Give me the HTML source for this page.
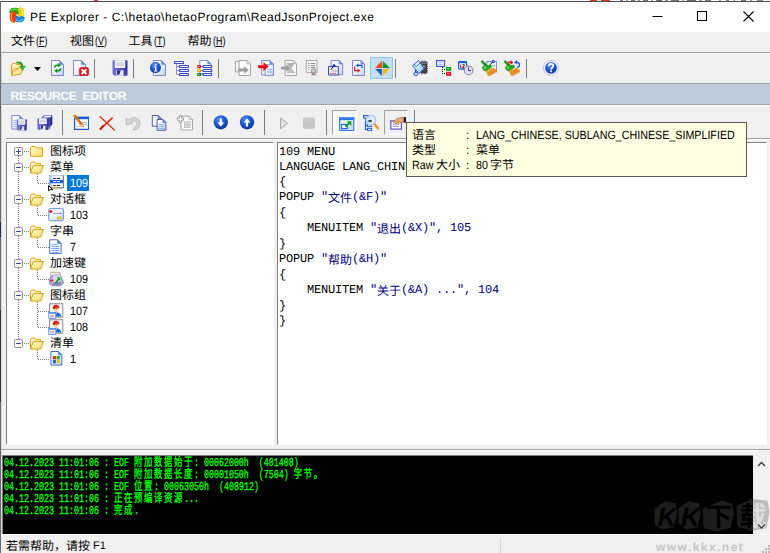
<!DOCTYPE html>
<html lang="zh-CN"><head><meta charset="utf-8"><title>PE Explorer</title>
<style>
html,body{margin:0;padding:0}
body{width:770px;height:553px;overflow:hidden;background:#f0f0f0;position:relative;text-rendering:geometricPrecision;font-family:"Liberation Sans",sans-serif;font-size:12px;color:#000}
body div{position:absolute;box-sizing:border-box}
svg{display:block}
.cj{display:inline-block;vertical-align:top;height:12px;line-height:12px;font-size:12px;letter-spacing:0;white-space:nowrap;overflow:visible;font-family:"Liberation Sans","Noto Sans CJK SC",sans-serif;font-weight:normal;font-style:normal}
.ic{width:16px;height:16px}
#topstrip{left:0;top:0;width:770px;height:1px;background:#fbfbfb}
#topstrip i{position:absolute;top:0;height:1px}
#topline{left:0;top:1px;width:770px;height:1px;background:#4f4f4f}
#leftline{left:0;top:1px;width:1px;height:552px;background:linear-gradient(180deg,#6b6b6b 0 221px,#1c2c5c 221px 236px,#6b6b6b 236px 309px,#30303c 309px 401px,#6b6b6b 401px)}
#leftline2{left:1px;top:32px;width:1px;height:521px;background:#d8d8d8}
#titlebar{left:1px;top:2px;width:769px;height:30px;background:#fff}
#titlebar .ic{left:8px!important;top:5px!important}
#title{left:29px;top:6.5px;font-size:12px;line-height:16px;white-space:nowrap;letter-spacing:.5px}
#wctl{position:absolute;left:649px;top:0}
#menubar{left:1px;top:32px;width:769px;height:20px;background:#f0f0f0}
.mi{white-space:nowrap;height:14px;line-height:12px;font-size:12px}
.mi .mk{font-size:12px;vertical-align:top;line-height:12px;display:inline-block;transform:scaleX(.74);transform-origin:0 0;margin-left:1px}
.hl{left:1px;width:769px;height:1px;background:#a0a0a0}
.hw{left:1px;width:769px;height:1px;background:#fff}
.tb{left:0;top:0;width:0;height:0}
.vs{width:1px;background:#7c7c7c}
.hotbtn{background:#c4def4;border:1px solid #92c6f2}
.downbtn{border:1px solid;border-color:#a0a0a0 #fff #fff #a0a0a0}
.downbtn.white{background:#f8f8f8}
#hdr{left:1px;top:84px;width:769px;height:20px;background:#becbda;color:#fff;font-weight:bold;font-size:12px;line-height:20px}
#hdr span{position:absolute;left:9.5px;top:1.5px;white-space:nowrap;letter-spacing:-.25px;word-spacing:3px}
.panel{background:#fff;border:1px solid;border-color:#828282 #fff #fff #828282;overflow:hidden}
#tree{left:6px;top:142px;width:268px;height:303px}
#editor{left:277px;top:142px;width:490px;height:303px}
#code{margin:0;position:absolute;white-space:pre;left:1px;top:2px;font-family:"Liberation Mono",monospace;font-size:12px;letter-spacing:-.2px;line-height:15px;color:#000}
#code div{position:static;white-space:pre}
#code b{font-weight:normal;color:#000080}
.tl{height:12px;line-height:12px;white-space:nowrap}
.tn{font-size:12px;line-height:14px;white-space:nowrap;transform:scaleX(.9);transform-origin:0 0}
.selt{color:#fff}
.sel{background:#0078d7}
.dh{height:1px;background:repeating-linear-gradient(90deg,#808080 0 1px,transparent 1px 2px)}
.dv{width:1px;background:repeating-linear-gradient(180deg,#808080 0 1px,transparent 1px 2px)}
#tip{left:406px;top:122px;width:341px;height:55px;background:#ffffe1;border:1px solid #575757}
.tt{font-size:12px;line-height:14px;white-space:nowrap}
.tt .nx{display:inline-block;transform:scaleX(.892);transform-origin:0 0;white-space:pre}
#log{left:2px;top:455px;width:751px;height:79px;background:#000;border-left:1px solid #808080;border-top:1px solid #808080;overflow:hidden}
#logtxt{left:1px;top:1px;font-family:"Liberation Mono",monospace;font-weight:normal;-webkit-text-stroke:.35px #00ff00;font-size:12px;line-height:12px;color:#00ff00;white-space:pre;transform:scaleX(.694);transform-origin:0 0}
#logtxt div{position:static;height:12px}
#logtxt .cj{letter-spacing:2.4px;color:#00ff00;font-family:"Liberation Mono","Noto Sans CJK SC",monospace}
#wmclip{left:648px;top:494px;width:105px;height:40px;overflow:hidden}
#wmsb{left:753px;top:456px;width:17px;height:78px;overflow:hidden}
#wmsb>svg:first-child{left:-105px!important;top:38px!important}
#sb{left:753px;top:456px;width:17px;height:78px;background:#f0f0f0}
#status{left:1px;top:534px;width:769px;height:19px;background:#f0f0f0;border-top:1px solid #fff}
.st{white-space:nowrap;line-height:12px;height:12px}
.st .f1{font-size:11px;vertical-align:top;line-height:13px;display:inline-block;white-space:pre}
#sdiv{left:499px;top:3px;width:1px;height:16px;background:#d7d7d7}
#wm2{left:655px;top:5px;font-weight:bold;font-size:12px;color:#c6c6c6;letter-spacing:1.45px}
#grip{position:absolute;right:0;bottom:0}

</style></head>
<body>
<svg width="0" height="0" style="position:absolute;left:-10px;top:-10px" aria-hidden="true"><defs>
<linearGradient id="dg" x1="0" y1="0" x2="1" y2="1"><stop offset="0" stop-color="#fff"/><stop offset=".45" stop-color="#f1f6fe"/><stop offset="1" stop-color="#b9d4f6"/></linearGradient>
<linearGradient id="gg" x1="0" y1="0" x2="1" y2="1"><stop offset="0" stop-color="#fdfdfd"/><stop offset="1" stop-color="#dcdcdc"/></linearGradient>
<linearGradient id="fg" x1="0" y1="0" x2="1" y2="0"><stop offset="0" stop-color="#7274d6"/><stop offset=".5" stop-color="#5558c4"/><stop offset="1" stop-color="#34369c"/></linearGradient>
<radialGradient id="bg" cx=".4" cy=".3" r=".75"><stop offset="0" stop-color="#4f8df2"/><stop offset=".55" stop-color="#1a55cf"/><stop offset="1" stop-color="#082f97"/></radialGradient>
<linearGradient id="yg" x1="0" y1="0" x2="1" y2="1"><stop offset="0" stop-color="#fffbd0"/><stop offset="1" stop-color="#f7dc6a"/></linearGradient>
<linearGradient id="og" x1="0" y1="0" x2="1" y2="1"><stop offset="0" stop-color="#f7b04c"/><stop offset="1" stop-color="#d8801c"/></linearGradient>
<linearGradient id="wg" x1="0" y1="0" x2="1" y2="1"><stop offset="0" stop-color="#fff"/><stop offset="1" stop-color="#9cc6f4"/></linearGradient>
</defs></svg>
<div id="topstrip"><i style="left:94px;width:4px;background:#d04030"></i><i style="left:590px;width:7px;background:#e03a1c"></i><i style="left:601px;width:9px;background:#e03a1c"></i><i style="left:620px;width:3px;background:#8a8a8a"></i><i style="left:626px;width:2px;background:#a8a8a8"></i><i style="left:631px;width:4px;background:#777"></i><i style="left:638px;width:2px;background:#999"></i><i style="left:643px;width:5px;background:#777"></i><i style="left:651px;width:2px;background:#a8a8a8"></i><i style="left:656px;width:6px;background:#6a6a6a"></i><i style="left:665px;width:3px;background:#999"></i><i style="left:671px;width:8px;background:#777"></i><i style="left:682px;width:2px;background:#a8a8a8"></i><i style="left:687px;width:9px;background:#6a6a6a"></i><i style="left:699px;width:3px;background:#999"></i><i style="left:705px;width:6px;background:#777"></i><i style="left:719px;width:2px;background:#999"></i><i style="left:726px;width:3px;background:#8a8a8a"></i><i style="left:733px;width:2px;background:#a8a8a8"></i><i style="left:741px;width:5px;background:#777"></i><i style="left:750px;width:2px;background:#999"></i><i style="left:757px;width:6px;background:#8a8a8a"></i></div><div id="topline"></div><div id="leftline"></div><div id="leftline2"></div>
<div id="titlebar">
<div class="ic" style="left:9px;top:7px;"><svg width="16" height="16" viewBox="0 0 16 16"><rect x="3" y="3" width="10" height="10" fill="#e8ecf4"/><g transform="rotate(0 8 8)"><path d="M.4 6Q-.2 .9 5 .8 8.4 .6 10.6 1.8L12.4 5 8.4 7.6 5.6 5.8Q4.6 5.6 4.6 7.2z" fill="#18a81c"/><path d="M1.8 4Q2.6 2.3 5.6 2.2L9.6 2.8" stroke="#5cd84a" stroke-width="1.2" fill="none" stroke-linecap="round"/></g><g transform="rotate(90 8 8)"><path d="M.4 6Q-.2 .9 5 .8 8.4 .6 10.6 1.8L12.4 5 8.4 7.6 5.6 5.8Q4.6 5.6 4.6 7.2z" fill="#f4ce0a"/><path d="M1.8 4Q2.6 2.3 5.6 2.2L9.6 2.8" stroke="#fff27a" stroke-width="1.2" fill="none" stroke-linecap="round"/></g><g transform="rotate(180 8 8)"><path d="M.4 6Q-.2 .9 5 .8 8.4 .6 10.6 1.8L12.4 5 8.4 7.6 5.6 5.8Q4.6 5.6 4.6 7.2z" fill="#1484e2"/><path d="M1.8 4Q2.6 2.3 5.6 2.2L9.6 2.8" stroke="#5cc2ff" stroke-width="1.2" fill="none" stroke-linecap="round"/></g><g transform="rotate(270 8 8)"><path d="M.4 6Q-.2 .9 5 .8 8.4 .6 10.6 1.8L12.4 5 8.4 7.6 5.6 5.8Q4.6 5.6 4.6 7.2z" fill="#ec3a0c"/><path d="M1.8 4Q2.6 2.3 5.6 2.2L9.6 2.8" stroke="#ff9c2a" stroke-width="1.2" fill="none" stroke-linecap="round"/></g></svg></div>
<div id="title">PE Explorer - C:\hetao\hetaoProgram\ReadJsonProject.exe</div>
<svg id="wctl" width="120" height="30" viewBox="0 0 120 30"><path d="M2.5 14.5h10" stroke="#000" fill="none"/><rect x="47.5" y="9.5" width="9" height="9" stroke="#000" fill="none"/><path d="M93.5 9.5l10 10M103.5 9.5l-10 10" stroke="#000" stroke-width="1.1" fill="none"/></svg>
</div>
<div id="menubar">
<div class="mi" style="left:10px;top:3px;"><span class="cj" style="width:24px">文件</span><span class="mk">(<u>F</u>)</span></div>
<div class="mi" style="left:69px;top:3px;"><span class="cj" style="width:24px">视图</span><span class="mk">(<u>V</u>)</span></div>
<div class="mi" style="left:127.5px;top:3px;"><span class="cj" style="width:24px">工具</span><span class="mk">(<u>T</u>)</span></div>
<div class="mi" style="left:186.5px;top:3px;"><span class="cj" style="width:24px">帮助</span><span class="mk">(<u>H</u>)</span></div>
</div>
<div class="hl" style="top:52px"></div><div class="hw" style="top:53px"></div>
<div id="tb1" class="tb">
<div class="hotbtn" style="left:370px;top:57px;width:23px;height:22px"></div>
<div class="ic" style="left:10px;top:60px;"><svg width="16" height="16" viewBox="0 0 16 16"><path d="M1.5 15.4V4.8L3 3.5H5.6L6.8 4.6H11.2L11.6 7.2" fill="url(#yg)" stroke="#d6a21e"/><path d="M1.5 15.5L3.4 9.4 13.8 6.8 10.8 14.2z" fill="url(#yg)" stroke="#d6a21e"/><path d="M2.8 12L9.4 8.8" stroke="#e2b43c" stroke-width=".8" fill="none"/><path d="M6.4 2.6H9.6Q12 3 12.4 6.4" stroke="#14921a" stroke-width="1.6" fill="none"/><path d="M9.8 6.4L15.2 6.2 12.6 10.2z" fill="#3cc43c" stroke="#128a18" stroke-width=".7"/></svg></div>
<div class="ic" style="left:51px;top:60px;"><svg width="16" height="16" viewBox="0 0 16 16"><path d="M0.5 0.5H8.5L12.5 4.5V15.5H0.5z" fill="url(#dg)" stroke="#8488cc"/><path d="M8.5 0.5V4.5H12.5z" fill="#4aa2ee" stroke="#8488cc" stroke-width=".6"/><path d="M2.6 7.4Q3.2 4.2 6.8 4.4L7 3 10 5.2 7 7.4 7 6Q4.6 5.8 4.2 7.6z" fill="#12961a"/><path d="M10.6 8.4Q10 11.8 6.4 11.6L6.2 13 3.2 10.8 6.2 8.6 6.2 10Q8.6 10.2 9 8.2z" fill="#12961a"/></svg></div>
<div class="ic" style="left:73px;top:60px;"><svg width="16" height="16" viewBox="0 0 16 16"><path d="M0.5 0.5H8.5L12.5 4.5V15.5H0.5z" fill="url(#dg)" stroke="#8488cc"/><path d="M8.5 0.5V4.5H12.5z" fill="#4aa2ee" stroke="#8488cc" stroke-width=".6"/><rect x="6.4" y="7.4" width="9.2" height="8.4" rx="2" fill="#d8201c" stroke="#b80c10" stroke-width=".6"/><path d="M8.6 9.4l4.8 4.6M13.4 9.4l-4.8 4.6" stroke="#fff" stroke-width="1.9"/></svg></div>
<div class="ic" style="left:112px;top:60px;"><svg width="16" height="16" viewBox="0 0 16 16"><g transform="translate(0 0) scale(1 1)"><path d="M.5 1.6Q.5 .3 1.8 .3H14.2Q15.5 .3 15.5 1.6V14.6Q15.5 15.8 14.2 15.8H2.4L.5 14z" fill="url(#fg)"/><rect x="2.8" y=".3" width="10.4" height="7.6" fill="#fdfdff"/><rect x="3.8" y="2" width="8.4" height="4.4" fill="#d6d6dc"/><rect x="4.3" y="10.2" width="7.2" height="5.6" fill="#ececf4"/><path d="M5 10.2h3.8l-1.6 4.6H5z" fill="#2c2e8c"/></g></svg></div>
<div class="ic" style="left:150px;top:60px;"><svg width="16" height="16" viewBox="0 0 16 16"><path d="M3.5 0.5H11.5L15.5 4.5V15.5H3.5z" fill="url(#dg)" stroke="#8488cc"/><path d="M11.5 0.5V4.5H15.5z" fill="#4aa2ee" stroke="#8488cc" stroke-width=".6"/><circle cx="5.4" cy="7.6" r="5.5" fill="url(#bg)"/><path d="M4.2 6.6H6.4V10.4H7.4V11.4H4V10.4H5V7.6H4.2zM4.8 3.8h1.8v1.8H4.8z" fill="#fff"/></svg></div>
<div class="ic" style="left:173px;top:60px;"><svg width="16" height="16" viewBox="0 0 16 16"><path d="M3.5 3.5V14.5H7M3.5 6.5H7M3.5 10.5H7" stroke="#8e92d6" fill="none"/><rect x="1.5" y="1.5" width="9" height="2" rx=".3" fill="#f4f8ff" stroke="#3a4ec4" stroke-width="1.1"/><rect x="6.5" y="5.5" width="9" height="2" rx=".3" fill="#f4f8ff" stroke="#3a4ec4" stroke-width="1.1"/><rect x="6.5" y="9.5" width="9" height="2" rx=".3" fill="#f4f8ff" stroke="#3a4ec4" stroke-width="1.1"/><rect x="6.5" y="13.5" width="9" height="2" rx=".3" fill="#f4f8ff" stroke="#3a4ec4" stroke-width="1.1"/></svg></div>
<div class="ic" style="left:197px;top:60px;"><svg width="16" height="16" viewBox="0 0 16 16"><path d="M2.8 0.5H10.6L14 3.9V13.5H2.8z" fill="#fff" stroke="#8488cc"/><path d="M10.6 0.5V3.9H14z" fill="#4aa2ee" stroke="#8488cc" stroke-width=".6"/><path d="M3 6.5h3M3 10.5h3M3 14.5h3" stroke="#8e92d6"/><rect x="6.1" y="5.5" width="8.6" height="2" rx=".3" fill="#f4f8ff" stroke="#3a4ec4" stroke-width="1.1"/><rect x="6.1" y="9.5" width="8.6" height="2" rx=".3" fill="#f4f8ff" stroke="#3a4ec4" stroke-width="1.1"/><rect x="6.1" y="13.5" width="8.6" height="2" rx=".3" fill="#f4f8ff" stroke="#3a4ec4" stroke-width="1.1"/><rect x=".2" y="5" width="3.8" height="3" fill="#e81c1c"/><rect x=".2" y="9" width="3.8" height="3" fill="#ffa60a"/><rect x=".2" y="13" width="3.8" height="3" fill="#0c8a10"/><rect x="1.2" y="6" width="1.8" height="1" fill="#ff8a8a"/><rect x="1.2" y="10" width="1.8" height="1" fill="#ffe27a"/><rect x="1.2" y="14" width="1.8" height="1" fill="#5fd85f"/></svg></div>
<div class="ic" style="left:235px;top:60px;"><svg width="16" height="16" viewBox="0 0 16 16"><path d="M0.5 1.5H6.3L8.9 4.1V11.9H0.5z" fill="#f6f6f6" stroke="#a4a4a4"/><path d="M6.3 1.5V4.1H8.9z" fill="#e4e4e4" stroke="#a4a4a4" stroke-width=".6"/><path d="M4.1 0.5H11.9L15.5 4.1V15.5H4.1z" fill="#fbfbfb" stroke="#a4a4a4"/><path d="M11.9 0.5V4.1H15.5z" fill="#e4e4e4" stroke="#a4a4a4" stroke-width=".6"/><path d="M3 8.4H9.2V6.2L13.8 10 9.2 13.8V11.6H3z" fill="#9e9e9e"/></svg></div>
<div class="ic" style="left:258px;top:60px;"><svg width="16" height="16" viewBox="0 0 16 16"><path d="M3.7 0.5H11.9L15.5 4.1V14.9H3.7z" fill="url(#dg)" stroke="#8488cc"/><path d="M11.9 0.5V4.1H15.5z" fill="#4aa2ee" stroke="#8488cc" stroke-width=".6"/><path d="M7.2 4.6H15.4V15.5H7.2z" fill="url(#dg)" stroke="#7a7ec4" stroke-width=".8"/><path d="M9 9.5h5M9 12h5" stroke="#9cc0f0" stroke-width="1.4"/><path d="M.2 5H5.4V2L10.6 6.6 5.4 11.2V8.2H.2z" fill="#ec0c14"/><path d="M.8 5.6H5.8V3.4" stroke="#ff6a6a" stroke-width=".6" fill="none"/></svg></div>
<div class="ic" style="left:281px;top:60px;"><svg width="16" height="16" viewBox="0 0 16 16"><path d="M4.1 0.5H12.3L15.5 3.7V15.5H4.1z" fill="#fafafa" stroke="#a4a4a4"/><path d="M12.3 0.5V3.7H15.5z" fill="#e6e6e6" stroke="#a4a4a4" stroke-width=".6"/><path d="M6 3.4H13L6.4 12.6H13.4L6 3.4M13 3.4" fill="#d9d9d9" stroke="#a6a6a6" stroke-width=".9"/><path d="M6 3.6H12.6L9.4 8z" fill="#b2b2b2"/><path d="M6.6 12.4H13L9.8 8z" fill="#c4c4c4"/><path d="M0 6.8H5V4.6L9.4 8.2 5 11.8V9.6H0z" fill="#9e9e9e"/></svg></div>
<div class="ic" style="left:304px;top:60px;"><svg width="16" height="16" viewBox="0 0 16 16"><path d="M2.3 .5H13V12.4H2.3z" fill="#fafafa" stroke="#a8a8a8"/><path d="M4 3.5h1.4M6.6 3.5h4.6M4 5.5h1.4M6.6 5.5h4.6M4 7.5h1.4M6.6 7.5h4.6M4 9.5h1.4" stroke="#8e8e8e"/><circle cx="9.6" cy="11" r="2.4" fill="#c9c9c9" stroke="#8c8c8c" stroke-width=".8"/><path d="M7.6 12.6V16L9.6 14.6 11.6 16V12.6" fill="#9c9c9c"/><rect x="8.8" y="14" width="1.6" height="1.2" fill="#e030d0"/></svg></div>
<div class="ic" style="left:328px;top:60px;"><svg width="16" height="16" viewBox="0 0 16 16"><path d="M3.1 0.5H11.1L14.7 4.1V14.7H3.1z" fill="url(#dg)" stroke="#8488cc"/><path d="M11.1 0.5V4.1H14.7z" fill="#4aa2ee" stroke="#8488cc" stroke-width=".6"/><path d="M.5 6.5H10.4V15H.5z" fill="#e6effc" stroke="#3038a0" stroke-width=".9"/><path d="M2.8 9.8L5.4 6.4" stroke="#101010" stroke-width="1"/><circle cx="6" cy="5.6" r="1.4" fill="#1030e0"/><path d="M3.6 10.6H7.6V9.6L9.4 11 7.6 12.4V11.4H3.6z" fill="#b4b4b4"/><path d="M2.2 13.4h1.2M4.4 13.4h1.2M6.6 13.4h1.2" stroke="#ee1414" stroke-width="1"/></svg></div>
<div class="ic" style="left:351px;top:60px;"><svg width="16" height="16" viewBox="0 0 16 16"><path d="M1.5 0.5H9.9L13.5 4.1V15.5H1.5z" fill="url(#dg)" stroke="#8488cc"/><path d="M9.9 0.5V4.1H13.5z" fill="#4aa2ee" stroke="#8488cc" stroke-width=".6"/><path d="M11 8V5.4H7" stroke="#1450e0" stroke-width="1.2" fill="none"/><path d="M4.8 5.4L7.4 3.2V7.6z" fill="#1450e0"/><path d="M3.6 6.6V10.6H7" stroke="#ee1418" stroke-width="1.2" fill="none"/><path d="M9.2 10.6L6.6 8.4V12.8z" fill="#ee1418"/></svg></div>
<div class="ic" style="left:375px;top:60px;"><svg width="16" height="16" viewBox="0 0 16 16"><path d="M6.8 .8V8H0z" fill="#f2561c"/><path d="M6.8 2.4V8H1.6z" fill="#d83a0e" opacity=".55"/><path d="M7.8 .8V8H15z" fill="#2c9c28"/><path d="M7.8 2.6V8H13z" fill="#127a16" opacity=".5"/><path d="M6.8 16V9H0z" fill="#2668c6"/><path d="M6.8 14V9H2z" fill="#134a9e" opacity=".55"/><path d="M7.8 16V9H15z" fill="#f6c420"/><path d="M7.8 14V9H12.8z" fill="#e6a808" opacity=".5"/></svg></div>
<div class="ic" style="left:412px;top:60px;"><svg width="16" height="16" viewBox="0 0 16 16"><path d="M8.6 1.6H15V13.2H8.6z" fill="#404040"/><path d="M9 2.8H15V3.8H9z" fill="#8a8a8a"/><rect x="10.6" y="5.4" width="2.2" height="2.2" fill="#9a9a9a"/><path d="M9.2 .6v1M10.8 .6v1M12.4 .6v1M14 .6v1M15 3h1M15 4.8h1M15 6.6h1M15 8.4h1M15 10.2h1M15 12h1M9.4 13.2v1M11 13.2v1M12.6 13.2v1M14.2 13.2v1" stroke="#404040" stroke-width=".9"/><path d="M6.6 .5L12 8.6 7 13.4 .5 5.8z" fill="url(#wg)" stroke="#2264e0"/><path d="M2.2 4.2L4.2 6.8 8.6 2.4" stroke="#2264e0" stroke-width=".9" fill="none"/><ellipse cx="3.8" cy="14" rx="2.1" ry="1.7" fill="#d4e6fc" stroke="#1c3cc8" stroke-width=".9"/><path d="M3.4 10.2L3.8 12.4" stroke="#1c3cc8" stroke-width="1.4"/></svg></div>
<div class="ic" style="left:436px;top:60px;"><svg width="16" height="16" viewBox="0 0 16 16"><rect x=".6" y=".6" width="8" height="5.8" fill="#fff" stroke="#3c4cc8" stroke-width="1.1"/><path d="M2.2 2.6h4.8M2.2 4.4h4.8" stroke="#8cbcf6" stroke-width=".9"/><path d="M6 7h1v1H6zM6 9h1v1H6zM6 11h1v1H6zM6 13h1v1H6zM8 9h1v1H8zM8 13h1v1H8z" fill="#111"/><rect x="10" y="7" width="5.2" height="3.8" fill="#0c9c14"/><rect x="11" y="8" width="2.4" height="1.2" fill="#64dc64"/><rect x="10" y="11.8" width="5.2" height="4" fill="#e8141c"/><rect x="11" y="12.8" width="2.4" height="1.2" fill="#ff7a7a"/></svg></div>
<div class="ic" style="left:458px;top:60px;"><svg width="16" height="16" viewBox="0 0 16 16"><rect x=".6" y="1.6" width="8" height="7.6" rx="1" fill="#fff" stroke="#1a5ce0" stroke-width="1.2"/><path d="M.6 1.4h8v1.8h-8z" fill="#1a5ce0"/><path d="M2.8 4.4v3.6M4.6 4.6Q6.4 4 6.2 5.6L4.6 8H6.6" stroke="#8c0c0c" stroke-width="1.1" fill="none"/><circle cx="10.6" cy="10.4" r="4.3" fill="#dcdcfa" stroke="#8c8c94" stroke-width="1.1"/><path d="M10.6 7.6V10.6H13" stroke="#38384a" stroke-width="1" fill="none"/></svg></div>
<div class="ic" style="left:481px;top:60px;"><svg width="16" height="16" viewBox="0 0 16 16"><rect x="5.8" y="1.5" width="9.8" height="9.4" fill="#e4eefc" stroke="#8088c8"/><path d="M9 4.8L11.6 2" stroke="#101010" stroke-width="1"/><circle cx="12.4" cy="1.5" r="1.5" fill="#1030e0"/><circle cx="12.4" cy="1.5" r=".5" fill="#fff"/><path d="M10.8 5.2h2.4v-.9l1.6 1.4-1.6 1.4v-.9h-2.4z" fill="#b4b4b4"/><rect x="11.8" y="8" width="1.2" height="1.2" fill="#ee1414"/><path d="M-.1 1.7L1.3 .5 5.8 4.8 4.3 6.2z" fill="#169c1a" stroke="#0a7410" stroke-width=".5"/><path d="M1.2 7.6L4 4.6 6.2 5.6 9.8 5.2 10.6 7 7.6 9.2 4.6 11 2.6 10z" fill="#1eaa22" stroke="#0a7410" stroke-width=".6"/><circle cx="3.9" cy="7.7" r="1.3" fill="#66e052"/><path d="M4.8 11L10.8 7.9 12.8 7.8 16.2 10.8 15.8 12.6 14 12.6 13.4 14 11.4 14 10.8 15.4 8.8 15.4 8.2 16.2 6.4 15z" fill="url(#og)"/><path d="M7 11.6l1.6 2.6M9.2 10.4l1.8 2.6M11.4 9.4l1.8 2.4" stroke="#c4700e" stroke-width=".7"/></svg></div>
<div class="ic" style="left:504px;top:60px;"><svg width="16" height="16" viewBox="0 0 16 16"><path d="M3.9 1.6H6.6V0L9.4 2.4 6.6 4.8V3.2H3.9z" fill="#ee141c"/><path d="M12.4 2.2Q15.6 2.4 15.6 5 15.4 7.4 12.8 7.4" stroke="#1c5ce0" stroke-width="1.4" fill="none"/><path d="M10 2.2L13 0V4.4z" fill="#1c5ce0"/><path d="M-.1 1.7L1.3 .5 5.8 4.8 4.3 6.2z" fill="#169c1a" stroke="#0a7410" stroke-width=".5"/><path d="M1.2 7.6L4 4.6 6.2 5.6 9.8 5.2 10.6 7 7.6 9.2 4.6 11 2.6 10z" fill="#1eaa22" stroke="#0a7410" stroke-width=".6"/><circle cx="3.9" cy="7.7" r="1.3" fill="#66e052"/><path d="M4.8 11L10.8 7.9 12.8 7.8 16.2 10.8 15.8 12.6 14 12.6 13.4 14 11.4 14 10.8 15.4 8.8 15.4 8.2 16.2 6.4 15z" fill="url(#og)"/><path d="M7 11.6l1.6 2.6M9.2 10.4l1.8 2.6M11.4 9.4l1.8 2.4" stroke="#c4700e" stroke-width=".7"/></svg></div>
<div class="ic" style="left:543px;top:60px;"><svg width="16" height="16" viewBox="0 0 16 16"><circle cx="8" cy="7.8" r="7.5" fill="#fdfdff" stroke="#aab4dc" stroke-width=".8"/><circle cx="8" cy="7.8" r="5.9" fill="url(#bg)"/><path d="M5.8 6.2Q5.8 3.8 8 3.8 10.3 3.8 10.3 5.8 10.3 7 9 7.8 8.1 8.4 8.1 9.4" stroke="#fff" stroke-width="1.7" fill="none"/><rect x="7.2" y="10.4" width="1.8" height="1.8" fill="#fff"/></svg></div>
<div class="ic" style="left:34px;top:67px;"><svg width="7" height="4" viewBox="0 0 7 4"><path d="M0 0h7L3.5 4z" fill="#000"/></svg></div>
<div class="vs" style="left:94px;top:59px;height:19px"></div>
<div class="vs" style="left:133px;top:59px;height:19px"></div>
<div class="vs" style="left:218px;top:59px;height:19px"></div>
<div class="vs" style="left:395px;top:59px;height:19px"></div>
<div class="vs" style="left:526px;top:59px;height:19px"></div>
</div>
<div class="hl" style="top:83px"></div>
<div id="hdr"><span>RESOURCE EDITOR</span></div>
<div class="hl" style="top:104px"></div><div class="hw" style="top:105px"></div>
<div id="tb2" class="tb">
<div class="downbtn white" style="left:332px;top:110px;width:25px;height:25px"></div>
<div class="downbtn" style="left:384px;top:110px;width:24px;height:25px"></div>
<div class="ic" style="left:11px;top:115px;"><svg width="16" height="16" viewBox="0 0 16 16"><path d="M0.8 0.5H8.6L12.2 4.1V14.1H0.8z" fill="url(#dg)" stroke="#8488cc"/><path d="M8.6 0.5V4.1H12.2z" fill="#4aa2ee" stroke="#8488cc" stroke-width=".6"/><path d="M2.4 5.5h3M2.4 7.5h3M2.4 9.5h3M2.4 11.5h3" stroke="#9cb8e8"/><g transform="translate(5.4 4) scale(0.675 0.725)"><path d="M.5 1.6Q.5 .3 1.8 .3H14.2Q15.5 .3 15.5 1.6V14.6Q15.5 15.8 14.2 15.8H2.4L.5 14z" fill="url(#fg)"/><rect x="2.8" y=".3" width="10.4" height="7.6" fill="#fdfdff"/><rect x="3.8" y="2" width="8.4" height="4.4" fill="#d6d6dc"/><rect x="4.3" y="10.2" width="7.2" height="5.6" fill="#ececf4"/><path d="M5 10.2h3.8l-1.6 4.6H5z" fill="#2c2e8c"/></g></svg></div>
<div class="ic" style="left:37px;top:115px;"><svg width="16" height="16" viewBox="0 0 16 16"><path d="M4.6 2.6L7.4 0H15.2V9.4L12 12.4z" fill="#3c3ea8"/><path d="M7.6 .6H14.4V2.4H6z" fill="#f4f4fc"/><path d="M13.4 2.6L15.2 .8V9.4L13.4 11z" fill="#2a2c8c"/><g transform="translate(0 3) scale(0.7375 0.7625)"><path d="M.5 1.6Q.5 .3 1.8 .3H14.2Q15.5 .3 15.5 1.6V14.6Q15.5 15.8 14.2 15.8H2.4L.5 14z" fill="url(#fg)"/><rect x="2.8" y=".3" width="10.4" height="7.6" fill="#fdfdff"/><rect x="3.8" y="2" width="8.4" height="4.4" fill="#d6d6dc"/><rect x="4.3" y="10.2" width="7.2" height="5.6" fill="#ececf4"/><path d="M5 10.2h3.8l-1.6 4.6H5z" fill="#2c2e8c"/></g><path d="M11.8 3.4L13.2 2.2V13.2L11.8 14.6z" fill="#4a4cb8"/></svg></div>
<div class="ic" style="left:73px;top:115px;"><svg width="16" height="16" viewBox="0 0 16 16"><rect x="1.6" y="2.4" width="14" height="12" fill="#fff" stroke="#1c5cdc" stroke-width="1.3"/><path d="M1 1.8h15.2v2.4H1z" fill="#1c5cdc"/><path d="M8 7.5h6M6 9.5h8M4 11.5h7" stroke="#b8b8b8"/><path d="M-.2 .4L2.4 -.4 10 9.4 7.6 10.8z" fill="#f08a1c"/><path d="M.6 -.1L2.4 -.4 10 9.4 8.8 10z" fill="#d46a0c"/><path d="M7.6 10.8L10 9.4 10.9 12.4z" fill="#f0d0a0"/><path d="M9.6 11.2L10.4 10.8 10.9 12.4z" fill="#303030"/></svg></div>
<div class="ic" style="left:99px;top:115px;"><svg width="16" height="16" viewBox="0 0 16 16"><path d="M.6 1.2L16 15.6" stroke="#e02408" stroke-width="1.2"/><path d="M13.6 2.6Q8 7.6 1.2 14.4" stroke="#e02408" stroke-width="1.5"/><path d="M4.6 10.4L1 14.6" stroke="#c81c04" stroke-width="2.2"/></svg></div>
<div class="ic" style="left:125px;top:115px;"><svg width="16" height="16" viewBox="0 0 16 16"><path d="M1 3L1.4 9.6 8 8.6 5.6 7Q8.6 4.4 11.4 6.6 13.4 9 10 12.4L8 14.4 11.4 14.8Q16.6 10.8 14.6 6 12.4 2 7.6 2.8 5.6 3.2 3.8 5z" fill="#d6d6d6" stroke="#b2b2b2" stroke-width=".8"/></svg></div>
<div class="ic" style="left:151px;top:115px;"><svg width="16" height="16" viewBox="0 0 16 16"><path d="M1.3 0.5H7.1L10.1 3.5V11.3H1.3z" fill="url(#dg)" stroke="#5458ac"/><path d="M7.1 0.5V3.5H10.1z" fill="#4aa2ee" stroke="#5458ac" stroke-width=".6"/><path d="M6.1 4.5H11.9L14.9 7.5V15.3H6.1z" fill="url(#dg)" stroke="#5458ac"/><path d="M11.9 4.5V7.5H14.9z" fill="#4aa2ee" stroke="#5458ac" stroke-width=".6"/><path d="M7.4 9.6h5.8M7.4 11.6h5.8M7.4 13.5h5.8" stroke="#8cb8f0" stroke-width="1.2"/></svg></div>
<div class="ic" style="left:177px;top:115px;"><svg width="16" height="16" viewBox="0 0 16 16"><path d="M3.9 1.1H12.1L15.5 4.5V14.9H3.9z" fill="#fbfbfb" stroke="#a4a4a4"/><path d="M12.1 1.1V4.5H15.5z" fill="#e6e6e6" stroke="#a4a4a4" stroke-width=".6"/><rect x="7" y="6.4" width="6.6" height="6.6" fill="#b8b8b8"/><rect x="7.8" y="7.2" width="2.2" height="2.2" fill="#e4e4e4"/><rect x="10.8" y="7.2" width="2.2" height="2.2" fill="#e4e4e4"/><rect x="7.8" y="10.2" width="2.2" height="2.2" fill="#e4e4e4"/><rect x="10.8" y="10.2" width="2.2" height="2.2" fill="#e4e4e4"/><path d="M2.3 .9H4.5V3H6.6V5.2H4.5V7.3H2.3V5.2H.2V3H2.3z" fill="#fff" stroke="#989898" stroke-width="1"/></svg></div>
<div class="ic" style="left:213px;top:115px;"><svg width="16" height="16" viewBox="0 0 16 16"><circle cx="7.8" cy="7.3" r="7.1" fill="url(#bg)"/><path d="M6.7 3.4H8.9V7.4H11.2L7.8 11.4 4.4 7.4H6.7z" fill="#fff"/></svg></div>
<div class="ic" style="left:239px;top:115px;"><svg width="16" height="16" viewBox="0 0 16 16"><circle cx="8" cy="7.3" r="7.1" fill="url(#bg)"/><path d="M6.9 11.4H9.1V7.4H11.4L8 3.4 4.6 7.4H6.9z" fill="#fff"/></svg></div>
<div class="ic" style="left:277px;top:115px;"><svg width="16" height="16" viewBox="0 0 16 16"><path d="M3.5 2.9L10.6 8.4 3.5 13.9z" fill="#dedede" stroke="#ababab"/></svg></div>
<div class="ic" style="left:301px;top:115px;"><svg width="16" height="16" viewBox="0 0 16 16"><rect x="2" y="2.4" width="11.8" height="11.4" rx="1.8" fill="#c3c3c3"/><rect x="2.8" y="3.2" width="10.2" height="4" rx="1.2" fill="#c9c9c9"/></svg></div>
<div class="ic" style="left:339px;top:115px;"><svg width="16" height="16" viewBox="0 0 16 16"><rect x=".7" y="3" width="14" height="12.3" fill="#eaf2fd" stroke="#1a66e0" stroke-width="1.1"/><path d="M8.4 14.8V9.6L14.2 8V14.8z" fill="#c8def8"/><path d="M.1 2.3h15.2v2.8H.1z" fill="#2a74e8"/><path d="M.1 2.3h15.2v1H.1z" fill="#5a98f2"/><rect x="2.6" y="9.4" width="5.6" height="4.2" fill="#fff" stroke="#1a66e0" stroke-width="1.1"/><path d="M6.4 11.8L10.6 7.6" stroke="#0ca41c" stroke-width="2"/><path d="M7.6 6.2H12.4V11z" fill="#0ca41c"/></svg></div>
<div class="ic" style="left:363px;top:115px;"><svg width="16" height="16" viewBox="0 0 16 16"><path d="M2.5 1V15M2.5 6.5H5M2.5 10.5H5M2.5 14.5H5" stroke="#1c5ce0" stroke-width="1.2" fill="none"/><rect x=".6" y=".6" width="6" height="2.4" fill="#fff" stroke="#1c5ce0" stroke-width="1.1"/><rect x="4.6" y="5.4" width="4" height="2.2" fill="#fff" stroke="#1c5ce0"/><rect x="4.6" y="9.4" width="4" height="2.2" fill="#fff" stroke="#1c5ce0"/><rect x="4.6" y="13.4" width="4" height="2.2" fill="#fff" stroke="#1c5ce0"/><path d="M11.4 9L15.4 13.6" stroke="#ee941c" stroke-width="2.4" stroke-linecap="round"/><circle cx="7.9" cy="5.2" r="4.9" fill="#dcecfc" fill-opacity=".85" stroke="#a8c4e8" stroke-width="1.1"/><rect x="5.4" y="5.2" width="3.2" height="1.6" fill="#202020"/></svg></div>
<div class="ic" style="left:390px;top:115px;"><svg width="16" height="16" viewBox="0 0 16 16"><rect x=".8" y="5.9" width="10.6" height="8.2" fill="#fff" stroke="#6a58d4" stroke-width="1.3"/><path d="M2.6 9.5h6.4M2.6 11.5h6.4" stroke="#9a9ad0" stroke-width=".9"/><path d="M3 7.8Q5.6 3.6 8.6 3L13.2 2.6V7Q10 7 8.4 8.8L7.4 7.6 6 9 5.2 7.6z" fill="#eeb078" stroke="#9c5c24" stroke-width=".6"/><path d="M6.4 6.4l1.6 1.6M7.8 5.2l1.6 1.6" stroke="#9c5c24" stroke-width=".6"/><path d="M13 2.2H16V7.6H13z" fill="#141414"/><path d="M13 2.4h1v5h-1z" fill="#8c9cc8"/></svg></div>
<div class="vs" style="left:62px;top:110px;height:25px"></div>
<div class="vs" style="left:202px;top:110px;height:25px"></div>
<div class="vs" style="left:264px;top:110px;height:25px"></div>
<div class="vs" style="left:326px;top:110px;height:25px"></div>
<div class="vs" style="left:414px;top:110px;height:25px"></div>
</div>
<div class="hl" style="top:138px;left:6px"></div><div class="hw" style="top:139px;left:6px"></div>
<div id="tree" class="panel">
<div class="dh" style="left:17px;top:8px;width:6px"></div><div class="dh" style="left:17px;top:24px;width:6px"></div><div class="dh" style="left:31px;top:40px;width:11px"></div><div class="dh" style="left:17px;top:56px;width:6px"></div><div class="dh" style="left:31px;top:72px;width:11px"></div><div class="dh" style="left:17px;top:88px;width:6px"></div><div class="dh" style="left:31px;top:104px;width:11px"></div><div class="dh" style="left:17px;top:120px;width:6px"></div><div class="dh" style="left:31px;top:136px;width:11px"></div><div class="dh" style="left:17px;top:152px;width:6px"></div><div class="dh" style="left:31px;top:168px;width:11px"></div><div class="dh" style="left:31px;top:184px;width:11px"></div><div class="dh" style="left:17px;top:200px;width:6px"></div><div class="dh" style="left:31px;top:216px;width:11px"></div><div class="dv" style="left:11px;top:13px;height:183px"></div><div class="dv" style="left:30px;top:31px;height:10px"></div><div class="dv" style="left:30px;top:63px;height:10px"></div><div class="dv" style="left:30px;top:95px;height:10px"></div><div class="dv" style="left:30px;top:127px;height:10px"></div><div class="dv" style="left:30px;top:159px;height:26px"></div><div class="dv" style="left:30px;top:207px;height:10px"></div>
<div class="ic" style="left:7px;top:4px;"><svg width="9" height="9" viewBox="0 0 9 9"><rect x=".5" y=".5" width="8" height="8" rx="1" fill="#fff" stroke="#919191"/><path d="M2 4.5h5M4.5 2v5" stroke="#3b4e9a" fill="none"/></svg></div><div class="ic" style="left:22px;top:0px;"><svg width="16" height="16" viewBox="0 0 16 16"><path d="M1.5 13.3V4.6L2.6 3.5H6.2L7.4 4.9H13.5V13.3z" fill="url(#yg)" stroke="#d8a41c"/></svg></div><div class="tl" style="left:43px;top:2px;"><span class="cj" style="width:36px">图标项</span></div><div class="ic" style="left:7px;top:20px;"><svg width="9" height="9" viewBox="0 0 9 9"><rect x=".5" y=".5" width="8" height="8" rx="1" fill="#fff" stroke="#919191"/><path d="M2 4.5h5" stroke="#3b4e9a" fill="none"/></svg></div><div class="ic" style="left:22px;top:16px;"><svg width="16" height="16" viewBox="0 0 16 16"><path d="M1.5 14V4.4L2.6 3H5.8L6.8 4.3H11.5V6.4" fill="url(#yg)" stroke="#d8a41c"/><path d="M1.5 14.1L4.2 6.5H14.6L11.6 14.1z" fill="url(#yg)" stroke="#d8a41c"/></svg></div><div class="tl" style="left:43px;top:18px;"><span class="cj" style="width:24px">菜单</span></div><div class="ic" style="left:41px;top:32px;"><svg width="16" height="16" viewBox="0 0 16 16"><rect x="1.4" y=".3" width="14" height="12.6" fill="#f4f6fa" stroke="#a4b4cc" stroke-width=".8"/><path d="M1.8 .7h2v12h-2z" fill="#a8ccf4"/><path d="M3.8 .7h1.4v12H3.8z" fill="#d8e8fa"/><path d="M15.4 .4V12.9H1.6" stroke="#6c6c6c" stroke-width=".9" fill="none"/><path d="M5.2 3.5h2.6M8.8 3.5h3.2" stroke="#222" stroke-width="1"/><rect x="1.8" y="5" width="13.2" height="3.2" fill="#1560dc"/><path d="M5.2 6.6h2.6M8.8 6.6h3.2" stroke="#fff" stroke-width="1"/><path d="M5.2 10.5h2.6M8.8 10.5h3.2" stroke="#222" stroke-width="1"/><path d="M3.2 12.4h5.8" stroke="#eca420" stroke-width="1.1"/></svg></div><div class="sel" style="left:60px;top:32px;width:22px;height:16px"></div><div class="tn selt" style="left:63px;top:33px;">109</div><div class="ic" style="left:7px;top:52px;"><svg width="9" height="9" viewBox="0 0 9 9"><rect x=".5" y=".5" width="8" height="8" rx="1" fill="#fff" stroke="#919191"/><path d="M2 4.5h5" stroke="#3b4e9a" fill="none"/></svg></div><div class="ic" style="left:22px;top:48px;"><svg width="16" height="16" viewBox="0 0 16 16"><path d="M1.5 14V4.4L2.6 3H5.8L6.8 4.3H11.5V6.4" fill="url(#yg)" stroke="#d8a41c"/><path d="M1.5 14.1L4.2 6.5H14.6L11.6 14.1z" fill="url(#yg)" stroke="#d8a41c"/></svg></div><div class="tl" style="left:43px;top:50px;"><span class="cj" style="width:36px">对话框</span></div><div class="ic" style="left:41px;top:64px;"><svg width="16" height="16" viewBox="0 0 16 16"><rect x=".8" y="1.4" width="14.6" height="12.4" rx="1.6" fill="url(#dg)" stroke="#6c8cd4"/><circle cx="2.8" cy="4.4" r="1.5" fill="#f01010"/><path d="M5.4 6.4h2M8.4 6.4h2M11.4 6.4h2" stroke="#606c84" stroke-width="1"/><rect x="9.2" y="10" width="4.4" height="2" fill="#f4e03c" stroke="#b8a018" stroke-width=".5"/></svg></div><div class="tn" style="left:63px;top:65px;">103</div><div class="ic" style="left:7px;top:84px;"><svg width="9" height="9" viewBox="0 0 9 9"><rect x=".5" y=".5" width="8" height="8" rx="1" fill="#fff" stroke="#919191"/><path d="M2 4.5h5" stroke="#3b4e9a" fill="none"/></svg></div><div class="ic" style="left:22px;top:80px;"><svg width="16" height="16" viewBox="0 0 16 16"><path d="M1.5 14V4.4L2.6 3H5.8L6.8 4.3H11.5V6.4" fill="url(#yg)" stroke="#d8a41c"/><path d="M1.5 14.1L4.2 6.5H14.6L11.6 14.1z" fill="url(#yg)" stroke="#d8a41c"/></svg></div><div class="tl" style="left:43px;top:82px;"><span class="cj" style="width:24px">字串</span></div><div class="ic" style="left:41px;top:96px;"><svg width="16" height="16" viewBox="0 0 16 16"><path d="M1.7 0.8H9.5L13.1 4.4V14.6H1.7z" fill="#fff" stroke="#4a6cc8"/><path d="M9.5 0.8V4.4H13.1z" fill="#4aa2ee" stroke="#4a6cc8" stroke-width=".6"/><path d="M3.4 5.5h6M3.4 7.5h8M3.4 9.5h8M3.4 11.5h8M3.4 13.4h8" stroke="#5c9cf0" stroke-width=".9"/></svg></div><div class="tn" style="left:63px;top:97px;">7</div><div class="ic" style="left:7px;top:116px;"><svg width="9" height="9" viewBox="0 0 9 9"><rect x=".5" y=".5" width="8" height="8" rx="1" fill="#fff" stroke="#919191"/><path d="M2 4.5h5" stroke="#3b4e9a" fill="none"/></svg></div><div class="ic" style="left:22px;top:112px;"><svg width="16" height="16" viewBox="0 0 16 16"><path d="M1.5 14V4.4L2.6 3H5.8L6.8 4.3H11.5V6.4" fill="url(#yg)" stroke="#d8a41c"/><path d="M1.5 14.1L4.2 6.5H14.6L11.6 14.1z" fill="url(#yg)" stroke="#d8a41c"/></svg></div><div class="tl" style="left:43px;top:114px;"><span class="cj" style="width:36px">加速键</span></div><div class="ic" style="left:41px;top:128px;"><svg width="16" height="16" viewBox="0 0 16 16"><path d="M2.6 1.6H12V5H2.6z" fill="#fcfcfc" stroke="#9c9c9c" stroke-width=".7"/><path d="M3.6 1.6v-1M5.4 1.6v-1M7.2 1.6v-1M9 1.6v-1M10.8 1.6v-1" stroke="#d8a818" stroke-width=".9"/><path d="M2 6.4L5 4H12.4L15.6 12 12.6 14.8H4.4L1.2 12.6z" fill="#b4b0d8" stroke="#6c6898" stroke-width=".7"/><path d="M5 4H12.4L13 11H5.4z" fill="#d8d4f0"/><path d="M5.4 11H13L12.6 14.8H4.4z" fill="#8c88b8"/><path d="M4.8 8.4L1.6 9.2 4 11.6 3.8 10.2 5.6 9.8z" fill="#e81c1c"/><path d="M7.4 12.2L11.4 7.2" stroke="#0c9c1c" stroke-width="1.5"/><path d="M8.8 6.4H12.2V10z" fill="#0c9c1c"/></svg></div><div class="tn" style="left:63px;top:129px;">109</div><div class="ic" style="left:7px;top:148px;"><svg width="9" height="9" viewBox="0 0 9 9"><rect x=".5" y=".5" width="8" height="8" rx="1" fill="#fff" stroke="#919191"/><path d="M2 4.5h5" stroke="#3b4e9a" fill="none"/></svg></div><div class="ic" style="left:22px;top:144px;"><svg width="16" height="16" viewBox="0 0 16 16"><path d="M1.5 14V4.4L2.6 3H5.8L6.8 4.3H11.5V6.4" fill="url(#yg)" stroke="#d8a41c"/><path d="M1.5 14.1L4.2 6.5H14.6L11.6 14.1z" fill="url(#yg)" stroke="#d8a41c"/></svg></div><div class="tl" style="left:43px;top:146px;"><span class="cj" style="width:36px">图标组</span></div><div class="ic" style="left:41px;top:160px;"><svg width="16" height="16" viewBox="0 0 16 16"><rect x="1.7" y=".8" width="13" height="13.4" fill="#fff" stroke="#7c7c7c"/><path d="M14.7 .8V14.2H1.7" stroke="#b4b4b4" fill="none"/><path d="M4.6 5.6Q4.4 1.6 8.4 1.8 11.6 2.2 11.4 5.4L9 4.6z" fill="#e01c14"/><circle cx="8" cy="6.6" r="2.3" fill="#f4c8a0"/><path d="M4.6 5.8Q6 3.6 8.6 4.6L11.4 5.6Q8 5.2 4.6 5.8z" fill="#b81410"/><path d="M4 13.6Q4.4 9 8 9 12.6 9.4 13.4 13.6z" fill="#1c6cdc"/><path d="M7 9.2L8.2 11 9.4 9.4z" fill="#f4f4f4"/><rect x=".8" y="9.8" width="7" height="5.6" fill="#fff" stroke="#5c8ce0" stroke-width=".9"/><path d="M.4 9.4h7.8v1.2H.4z" fill="#4a7cd8"/><path d="M2.2 12.3h4.2M2.2 13.8h4.2" stroke="#909090" stroke-width=".8"/></svg></div><div class="tn" style="left:63px;top:161px;">107</div><div class="ic" style="left:41px;top:176px;"><svg width="16" height="16" viewBox="0 0 16 16"><rect x="1.7" y=".8" width="13" height="13.4" fill="#fff" stroke="#7c7c7c"/><path d="M14.7 .8V14.2H1.7" stroke="#b4b4b4" fill="none"/><path d="M4.6 5.6Q4.4 1.6 8.4 1.8 11.6 2.2 11.4 5.4L9 4.6z" fill="#e01c14"/><circle cx="8" cy="6.6" r="2.3" fill="#f4c8a0"/><path d="M4.6 5.8Q6 3.6 8.6 4.6L11.4 5.6Q8 5.2 4.6 5.8z" fill="#b81410"/><path d="M4 13.6Q4.4 9 8 9 12.6 9.4 13.4 13.6z" fill="#1c6cdc"/><path d="M7 9.2L8.2 11 9.4 9.4z" fill="#f4f4f4"/><rect x=".8" y="9.8" width="7" height="5.6" fill="#fff" stroke="#5c8ce0" stroke-width=".9"/><path d="M.4 9.4h7.8v1.2H.4z" fill="#4a7cd8"/><path d="M2.2 12.3h4.2M2.2 13.8h4.2" stroke="#909090" stroke-width=".8"/></svg></div><div class="tn" style="left:63px;top:177px;">108</div><div class="ic" style="left:7px;top:196px;"><svg width="9" height="9" viewBox="0 0 9 9"><rect x=".5" y=".5" width="8" height="8" rx="1" fill="#fff" stroke="#919191"/><path d="M2 4.5h5" stroke="#3b4e9a" fill="none"/></svg></div><div class="ic" style="left:22px;top:192px;"><svg width="16" height="16" viewBox="0 0 16 16"><path d="M1.5 14V4.4L2.6 3H5.8L6.8 4.3H11.5V6.4" fill="url(#yg)" stroke="#d8a41c"/><path d="M1.5 14.1L4.2 6.5H14.6L11.6 14.1z" fill="url(#yg)" stroke="#d8a41c"/></svg></div><div class="tl" style="left:43px;top:194px;"><span class="cj" style="width:24px">清单</span></div><div class="ic" style="left:41px;top:208px;"><svg width="16" height="16" viewBox="0 0 16 16"><path d="M2.9 0.5H10.5L13.9 3.9V14.1H2.9z" fill="url(#dg)" stroke="#4a6cc8"/><path d="M10.5 0.5V3.9H13.9z" fill="#4aa2ee" stroke="#4a6cc8" stroke-width=".6"/><rect x="4.8" y="5" width="3.2" height="3.4" fill="#ec3414"/><rect x="8.6" y="5" width="3.2" height="3.4" fill="#2cac1c"/><rect x="4.8" y="9" width="3.2" height="3.4" fill="#1c6ce4"/><rect x="8.6" y="9" width="3.2" height="3.4" fill="#f8c40c"/></svg></div><div class="tn" style="left:63px;top:209px;">1</div>
<div class="ic" style="left:41px;top:42px;"><svg width="7" height="7" viewBox="0 0 7 7"><path d="M.6 .6v5.2l1.6-1.2h2.6z" fill="#fff" stroke="#000" stroke-width="1"/></svg></div>
</div>
<div id="editor" class="panel"><div id="code"><div style="height:15px">109 MENU</div><div style="height:15px">LANGUAGE LANG_CHINESE, SUBLANG_CHINESE_SIMPLIFIED</div><div style="height:15px">{</div><div style="height:16px">POPUP <b>"<span class="cj" style="width:24px;color:#000080;vertical-align:-2px">文件</span>(&amp;F)"</b></div><div style="height:15px">{</div><div style="height:16px">    MENUITEM <b>"<span class="cj" style="width:24px;color:#000080;vertical-align:-2px">退出</span>(&amp;X)", 105</b></div><div style="height:15px">}</div><div style="height:16px">POPUP <b>"<span class="cj" style="width:24px;color:#000080;vertical-align:-2px">帮助</span>(&amp;H)"</b></div><div style="height:15px">{</div><div style="height:16px">    MENUITEM <b>"<span class="cj" style="width:24px;color:#000080;vertical-align:-2px">关于</span>(&amp;A) ...", 104</b></div><div style="height:15px">}</div><div style="height:15px">}</div></div></div>
<div id="tip">
<div class="tt" style="left:5px;top:6px;"><span class="cj" style="width:24px">语言</span></div>
<div class="tt" style="left:59px;top:5px;">:</div>
<div class="tt" style="left:69px;top:5px;"><span id="tipv" class="nx">LANG_CHINESE, SUBLANG_CHINESE_SIMPLIFIED</span></div>
<div class="tt" style="left:5px;top:21px;"><span class="cj" style="width:24px">类型</span></div>
<div class="tt" style="left:59px;top:20px;">:</div>
<div class="tt" style="left:69px;top:21px;"><span class="cj" style="width:24px">菜单</span></div>
<div class="tt" style="left:5px;top:35px;"><span class="nx">Raw</span></div>
<div class="tt" style="left:29px;top:36px;"><span class="cj" style="width:24px">大小</span></div>
<div class="tt" style="left:59px;top:35px;">:</div>
<div class="tt" style="left:69px;top:35px;"><span class="nx">80</span></div>
<div class="tt" style="left:83px;top:36px;"><span class="cj" style="width:24px">字节</span></div>
</div>
<div class="hl" style="top:449px"></div><div class="hw" style="top:450px"></div>
<div id="log"><div id="logtxt"><div>04.12.2023 11:01:06 : EOF <span class="cj" style="width:86.4px">附加数据始于</span>: 00062000h  (401408)</div><div>04.12.2023 11:01:06 : EOF <span class="cj" style="width:86.4px">附加数据长度</span>: 00001050h  (7504) <span class="cj" style="width:43.2px">字节。</span></div><div>04.12.2023 11:01:06 : EOF <span class="cj" style="width:28.8px">位置</span>: 00063050h  (408912)</div><div>04.12.2023 11:01:06 : <span class="cj" style="width:100.8px">正在预编译资源</span>...</div><div>04.12.2023 11:01:06 : <span class="cj" style="width:28.8px">完成</span>.</div></div>
</div>
<div id="sb"></div>
<div id="wmclip"><svg width="122" height="40" viewBox="648 494 122 40" style="position:absolute;left:0;top:0"><g fill="#1d1d1d"><path d="M654.5 509L664 501.5 675.5 503 677.5 512 674 527 662 529.5 654.5 524z"/><path d="M678.5 508L689 501 699 503.5 700.5 514 697.5 527 686 529.5 678.5 523z"/><path d="M703 508.5L722 500.5 732 503.5 734 513 730.5 528 716 531.5 703.5 528z"/><path d="M736.5 506L752 498.5 767.5 501 769.5 512 766.5 528 752 531 737.5 527z"/></g><g fill="#000"><text x="657.5" y="525.5" font-family="Liberation Sans,sans-serif" font-weight="bold" font-style="italic" font-size="26">K</text><text x="681" y="525.5" font-family="Liberation Sans,sans-serif" font-weight="bold" font-style="italic" font-size="26">K</text><text x="706" y="526.4" font-family="'Liberation Sans','Noto Sans CJK SC',sans-serif" font-weight="bold" font-size="26">下</text><text x="739.5" y="526.3" font-family="'Liberation Sans','Noto Sans CJK SC',sans-serif" font-weight="bold" font-size="27">载</text></g></svg></div>
<div id="wmsb"><svg width="122" height="40" viewBox="648 494 122 40" style="position:absolute;left:0;top:0"><g fill="#bebebe"><path d="M654.5 509L664 501.5 675.5 503 677.5 512 674 527 662 529.5 654.5 524z"/><path d="M678.5 508L689 501 699 503.5 700.5 514 697.5 527 686 529.5 678.5 523z"/><path d="M703 508.5L722 500.5 732 503.5 734 513 730.5 528 716 531.5 703.5 528z"/><path d="M736.5 506L752 498.5 767.5 501 769.5 512 766.5 528 752 531 737.5 527z"/></g><g fill="#dedede"><text x="657.5" y="525.5" font-family="Liberation Sans,sans-serif" font-weight="bold" font-style="italic" font-size="26">K</text><text x="681" y="525.5" font-family="Liberation Sans,sans-serif" font-weight="bold" font-style="italic" font-size="26">K</text><text x="706" y="526.4" font-family="'Liberation Sans','Noto Sans CJK SC',sans-serif" font-weight="bold" font-size="26">下</text><text x="739.5" y="526.3" font-family="'Liberation Sans','Noto Sans CJK SC',sans-serif" font-weight="bold" font-size="27">载</text></g></svg><svg width="17" height="78" viewBox="0 0 17 78" style="position:absolute;left:0;top:0"><path d="M5 10l3.5-3.5 3.5 3.5M5 68.5l3.5 3.5 3.5-3.5" stroke="#404040" stroke-width="1.4" fill="none"/></svg></div>
<div id="status">
<div class="st" style="left:5px;top:5px;"><span class="cj" style="width:84px">若需帮助，请按</span><span class="f1"> F1</span></div>
<div id="sdiv"></div>
<div id="wm2">www.kkx.net</div>
<svg id="grip" width="8" height="9" viewBox="0 0 8 9" fill="#b8b8b8"><rect x="6" y="1" width="2" height="2"/><rect x="3" y="4" width="2" height="2"/><rect x="6" y="4" width="2" height="2"/><rect x="0" y="7" width="2" height="2"/><rect x="3" y="7" width="2" height="2"/><rect x="6" y="7" width="2" height="2"/></svg>
</div>
</body></html>
